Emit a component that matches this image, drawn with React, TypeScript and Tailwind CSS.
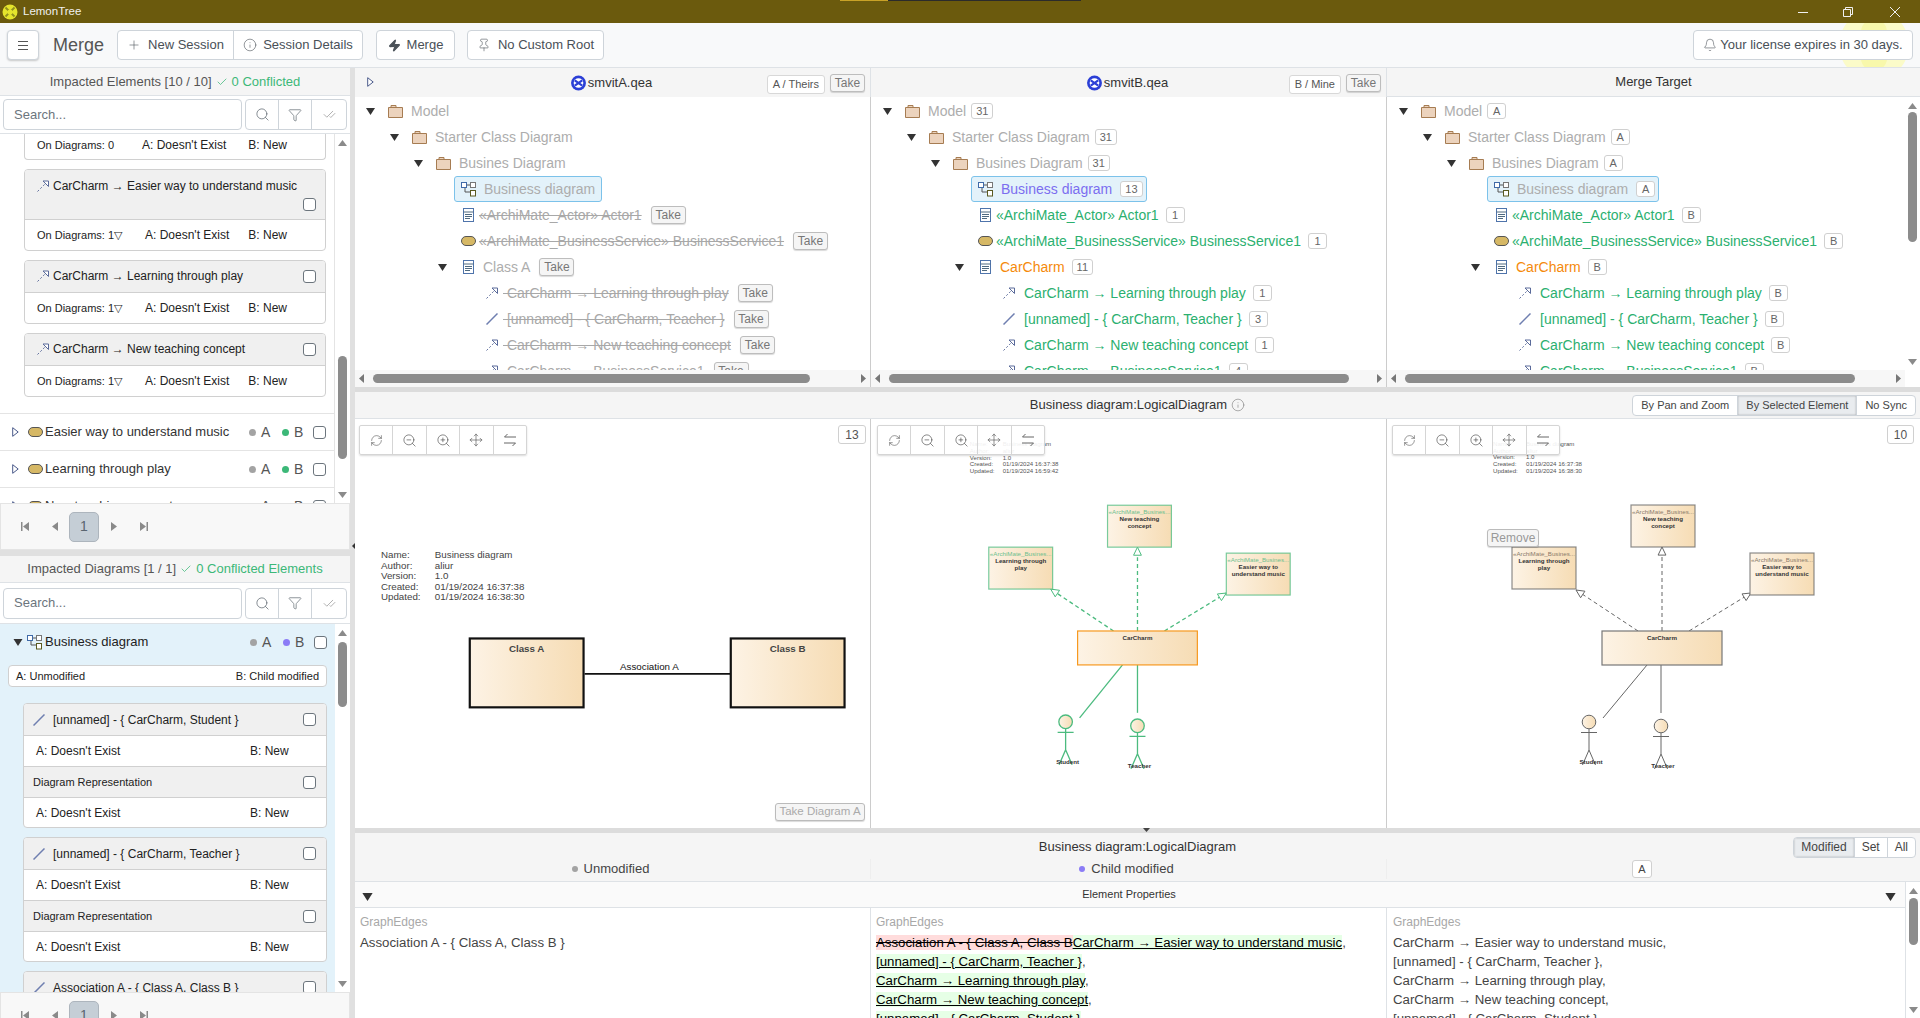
import type { ReactNode } from 'react'
import { Bell, Check, CheckCheck, Filter, Info, Move, Pin, Plus, RefreshCw, Search, Zap, ZoomIn, ZoomOut } from 'lucide-react'

function Btn({ children, className = '' }: { children: ReactNode; className?: string }) {
  return <div className={'flex items-center justify-center text-[13px] text-[#495057] ' + className}>{children}</div>
}

function CheckBox({ className = '' }: { className?: string }) {
  return <div className={'h-[13px] w-[13px] shrink-0 rounded-[3px] border border-[#6c757d] bg-white ' + className} />
}

function Take({ className = '' }: { className?: string }) {
  return <div className={'flex h-[18px] w-[35px] shrink-0 items-center justify-center rounded-[3px] border border-[#bdbdbd] bg-[#f5f5f5] text-[12px] leading-none text-[#777] shadow-[0_1px_1px_rgba(0,0,0,0.15)] ' + className}>Take</div>
}

function Badge({ children, className = '' }: { children: ReactNode; className?: string }) {
  return <div className={'ml-[5px] flex h-[16px] min-w-[19px] shrink-0 items-center justify-center rounded-[3px] border border-[#d0d0d0] bg-white px-[4px] text-[11px] leading-none text-[#666] ' + className}>{children}</div>
}

function TriDown({ className = '' }: { className?: string }) {
  return <svg width="9" height="7" viewBox="0 0 9 7" className={'shrink-0 ' + className}><path d="M0 0h9L4.500 7z" fill="#333" /></svg>
}

function TriRight() {
  return <svg width="7" height="10" viewBox="0 0 7 10" className="shrink-0"><path d="M.7.7 6.200 5 .7 9.300z" fill="#fff" stroke="#4a5a8a" /></svg>
}

function Folder() {
  return (
    <svg width="15" height="14" viewBox="0 0 15 14" className="shrink-0">
      <path d="M.5 3.500h14v10H.5zM3 3.500V1.500h5v2" fill="#ecd3bd" stroke="#a67c52" />
    </svg>
  )
}

function DiagramIcon() {
  return (
    <svg width="15" height="15" viewBox="0 0 15 15" className="shrink-0">
      <path d="M4 5v5h6M5 3h5" fill="none" stroke="#555" />
      <rect x=".5" y=".5" width="5" height="5" fill="#fff" stroke="#3f6aa8" />
      <rect x="9.500" y=".5" width="5" height="5" fill="#fff" stroke="#777" />
      <rect x="9.500" y="8.500" width="5" height="5.500" fill="#fff" stroke="#5a5a20" />
    </svg>
  )
}

function ClassIcon() {
  return (
    <svg width="11" height="14" viewBox="0 0 11 14" className="shrink-0">
      <rect x=".5" y=".5" width="10" height="13" fill="#fff" stroke="#4f74ab" />
      <path d="M.5 4h10M2 6.500h7M2 8.500h7M2 10.500h5" stroke="#4f6a80" />
    </svg>
  )
}

function Oval({ className = '' }: { className?: string }) {
  return <div className={'h-[10px] w-[15px] shrink-0 rounded-[5px] border border-[#555] bg-[#d6b865] ' + className} />
}

function RelIcon() {
  return (
    <svg width="12" height="12" viewBox="0 0 12 12" className="shrink-0">
      <path d="M.5 11.500 8 4" fill="none" stroke="#5a6a9a" strokeDasharray="2 2" />
      <path d="M6 1h5.500v5.500z" fill="#fff" stroke="#5a6a9a" />
    </svg>
  )
}

function LineIcon() {
  return (
    <svg width="12" height="12" viewBox="0 0 12 12" className="shrink-0">
      <path d="M.5 11.500 11.500.5" fill="none" stroke="#6f7fb0" strokeWidth="1.500" />
    </svg>
  )
}

function Row({ pl, children }: { pl: string; children: ReactNode }) {
  return <div className={'flex h-[26px] items-center whitespace-nowrap ' + pl}>{children}</div>
}

const greyText = 'text-[#adadad]'
const greenText = 'text-[#2bb06f]'
const struck = 'text-[#a8a8a8] line-through'

function FolderRow({ pl, label, badge }: { pl: string; label: string; badge?: string }) {
  return (
    <Row pl={pl}>
      <TriDown />
      <div className="ml-[13px]"><Folder /></div>
      <span className={'ml-[8px] ' + greyText}>{label}</span>
      {badge && <Badge>{badge}</Badge>}
    </Row>
  )
}

function SelectedRow({ label, labelClass, badge }: { label: string; labelClass: string; badge?: string }) {
  return (
    <Row pl="pl-[99px]">
      <div className="flex h-[26px] items-center rounded-[3px] border border-[#7cc2ea] bg-[#e3f2fa] pl-[6px] pr-[3px]">
        <DiagramIcon />
        <span className={'ml-[8px] mr-[3px] ' + labelClass}>{label}</span>
        {badge && <Badge className="ml-0">{badge}</Badge>}
      </div>
    </Row>
  )
}

function ElementRows({ cls, trail, labels }: { cls: string; trail: (i: number) => ReactNode; labels: string[] }) {
  return (
    <>
      <Row pl="pl-[108px]"><ClassIcon /><span className={'ml-[5px] ' + cls}>«ArchiMate_Actor» Actor1</span>{trail(0)}</Row>
      <Row pl="pl-[106px]"><Oval /><span className={'ml-[3px] ' + cls}>«ArchiMate_BusinessService» BusinessService1</span>{trail(1)}</Row>
      <Row pl="pl-[83px]">
        <TriDown />
        <div className="ml-[16px]"><ClassIcon /></div>
        <span className={'ml-[9px] ' + labels[0]}>{labels[1]}</span>
        {trail(2)}
      </Row>
    </>
  )
}

function TreeA() {
  const t = (cls: string) => <Take className={cls} />
  return (
    <div className="h-[273px] overflow-hidden pt-px">
      <FolderRow pl="pl-[11px]" label="Model" />
      <FolderRow pl="pl-[35px]" label="Starter Class Diagram" />
      <FolderRow pl="pl-[59px]" label="Busines Diagram" />
      <SelectedRow label="Business diagram" labelClass={greyText} />
      <ElementRows cls={struck} trail={() => t('ml-[9px]')} labels={[greyText, 'Class A']} />
      <Row pl="pl-[131px]"><RelIcon /><span className={'ml-[5px] ' + struck}>{'\u00a0CarCharm → Learning through play'}</span>{t('ml-[9px]')}</Row>
      <Row pl="pl-[131px]"><LineIcon /><span className={'ml-[5px] ' + struck}>{'\u00a0[unnamed] - { CarCharm, Teacher }'}</span>{t('ml-[9px]')}</Row>
      <Row pl="pl-[131px]"><RelIcon /><span className={'ml-[5px] ' + struck}>{'\u00a0CarCharm → New teaching concept'}</span>{t('ml-[9px]')}</Row>
      <Row pl="pl-[131px]"><RelIcon /><span className={'ml-[5px] ' + struck}>{'\u00a0CarCharm → BusinessService1'}</span>{t('ml-[9px]')}</Row>
    </div>
  )
}

function TreeRight({ top, sel, selClass, el, cls, rel }: { top: string; sel: string; selClass: string; el: string[]; cls: string; rel: string[] }) {
  return (
    <div className="h-[273px] overflow-hidden pl-[1px] pt-px">
      <FolderRow pl="pl-[11px]" label="Model" badge={top} />
      <FolderRow pl="pl-[35px]" label="Starter Class Diagram" badge={top} />
      <FolderRow pl="pl-[59px]" label="Busines Diagram" badge={top} />
      <SelectedRow label="Business diagram" labelClass={selClass} badge={sel} />
      <ElementRows cls={cls} trail={(i) => <Badge className="ml-[7px]">{el[i]}</Badge>} labels={['text-[#f58a0b]', 'CarCharm']} />
      <Row pl="pl-[131px]"><RelIcon /><span className={'ml-[9px] ' + cls}>CarCharm → Learning through play</span><Badge className="ml-[7px]">{rel[0]}</Badge></Row>
      <Row pl="pl-[131px]"><LineIcon /><span className={'ml-[9px] ' + cls}>{'[unnamed] - { CarCharm, Teacher }'}</span><Badge className="ml-[7px]">{rel[1]}</Badge></Row>
      <Row pl="pl-[131px]"><RelIcon /><span className={'ml-[9px] ' + cls}>CarCharm → New teaching concept</span><Badge className="ml-[7px]">{rel[2]}</Badge></Row>
      <Row pl="pl-[131px]"><RelIcon /><span className={'ml-[9px] ' + cls}>CarCharm → BusinessService1</span><Badge className="ml-[7px]">{rel[3]}</Badge></Row>
    </div>
  )
}

function HScroll({ thumb }: { thumb: string }) {
  return (
    <div className="flex h-[17px] items-center bg-[#f7f7f7] px-[4px]">
      <svg width="5" height="9" viewBox="0 0 5 9" className="shrink-0"><path d="M5 0v9L0 4.500z" fill="#777" /></svg>
      <div className="flex-1 pl-[9px] pr-[5px]"><div className={'h-[9px] rounded-[5px] bg-[#8c8c8c] ' + thumb} /></div>
      <svg width="5" height="9" viewBox="0 0 5 9" className="shrink-0"><path d="M0 0v9l5-4.500z" fill="#777" /></svg>
    </div>
  )
}

function VScroll({ thumb, className = '' }: { thumb: string; className?: string }) {
  return (
    <div className={'flex w-[15px] shrink-0 flex-col items-center justify-between bg-white pb-[5px] pt-[6px] ' + className}>
      <div className="w-full">
        <svg width="9" height="6" viewBox="0 0 9 6" className="mx-auto"><path d="M0 6h9L4.500 0z" fill="#8a8a8a" /></svg>
        <div className={'mx-auto w-[9px] rounded-[5px] bg-[#8c8c8c] ' + thumb} />
      </div>
      <svg width="9" height="6" viewBox="0 0 9 6"><path d="M0 0h9L4.500 6z" fill="#8a8a8a" /></svg>
    </div>
  )
}

function SearchRow({ className }: { className: string }) {
  return (
    <div className={'flex items-center border-b border-[#dee2e6] pl-[3px] pr-[3px] ' + className}>
      <div className="flex h-[31px] w-[239px] items-center rounded-[4px] border border-[#ced4da] bg-white pl-[10px] text-[13px] text-[#6c757d]">Search...</div>
      <div className="ml-[3px] flex h-[31px] w-[102px] rounded-[4px] border border-[#ced4da] bg-white text-[#5f6870]">
        <div className="flex w-[33px] items-center justify-center border-r border-[#ced4da]"><Search size={15} strokeWidth={1.2} /></div>
        <div className="flex w-[33px] items-center justify-center border-r border-[#ced4da]"><Filter size={14} strokeWidth={1.2} /></div>
        <div className="flex flex-1 items-center justify-center text-[#888]"><CheckCheck size={13} strokeWidth={1.2} /></div>
      </div>
    </div>
  )
}

function Pager({ className = '' }: { className?: string }) {
  return (
    <div className={'flex items-center border border-[#e4e4e4] bg-[#f8f8f8] pl-[20px] ' + className}>
      <svg width="8" height="9" viewBox="0 0 8 9" className="shrink-0"><path d="M0 0h1.500v9H0zM8 0v9L2 4.500z" fill="#8a8a8a" /></svg>
      <svg width="6" height="9" viewBox="0 0 6 9" className="ml-[23px] shrink-0"><path d="M6 0v9L0 4.500z" fill="#8a8a8a" /></svg>
      <div className="ml-[11px] flex h-[30px] w-[30px] shrink-0 items-center justify-center rounded-[5px] border border-[#adb5bd] bg-[#c5ced6] text-[14px] text-[#5a6570]">1</div>
      <svg width="6" height="9" viewBox="0 0 6 9" className="ml-[12px] shrink-0"><path d="M0 0v9l6-4.500z" fill="#8a8a8a" /></svg>
      <svg width="8" height="9" viewBox="0 0 8 9" className="ml-[23px] shrink-0"><path d="M0 0v9l6-4.500zM6.500 0H8v9H6.500z" fill="#8a8a8a" /></svg>
    </div>
  )
}

function ElementCard({ title, tall, foot }: { title: string; tall?: boolean; foot: string }) {
  return (
    <div className="ml-[24px] w-[302px] overflow-hidden rounded-[4px] border border-[#d0d0d0] bg-white text-[12px] text-[#222]">
      <div className={tall ? 'relative h-[50px] border-b border-[#d0d0d0] bg-[#f0f0f0] pl-[12px] pt-[7px]' : 'flex h-[32px] items-center border-b border-[#d0d0d0] bg-[#f0f0f0] pb-px pl-[12px]'}>
        <div className="flex items-center whitespace-nowrap"><RelIcon /><span className="ml-[4px]">{title}</span></div>
        {tall ? <CheckBox className="absolute bottom-[8px] right-[9px]" /> : <CheckBox className="ml-auto mr-[9px]" />}
      </div>
      <div className="flex h-[30px] items-center pl-[12px]">
        <span className="w-[108px] text-[11px]">{foot}</span>
        <span>A: Doesn't Exist</span>
        <span className="ml-auto mr-[38px]">B: New</span>
      </div>
    </div>
  )
}

function ListRow({ label }: { label: string }) {
  return (
    <div className="flex h-[37px] shrink-0 items-center border-t border-[#e4e4e4] pl-[12px] pr-[8px] text-[13px] text-[#333]">
      <TriRight />
      <Oval className="ml-[9px]" />
      <span className="ml-[2px] whitespace-nowrap">{label}</span>
      <Flags b="bg-[#3cb878]" />
    </div>
  )
}

function Flags({ b }: { b: string }) {
  return (
    <div className="ml-auto flex items-center text-[14px] text-[#555]">
      <div className="h-[7px] w-[7px] rounded-full bg-[#a3a3a3]" />
      <span className="ml-[5px] w-[21px]">A</span>
      <div className={'h-[7px] w-[7px] rounded-full ' + b} />
      <span className="ml-[5px] w-[19px]">B</span>
      <CheckBox />
    </div>
  )
}

function AB({ className = '' }: { className?: string }) {
  return (
    <div className={'flex items-center pl-[12px] ' + className}>
      <span className="w-[214px]">A: Doesn't Exist</span>
      <span>B: New</span>
    </div>
  )
}

function Rep({ title }: { title: string }) {
  return (
    <div className="w-[304px] overflow-hidden rounded-[4px] border border-[#d0d0d0] bg-white text-[12px] text-[#222]">
      <div className="flex h-[32px] items-center border-b border-[#d0d0d0] bg-[#f0f0f0] pl-[9px] pr-[10px]">
        <LineIcon />
        <span className="ml-[8px] whitespace-nowrap">{title}</span>
        <CheckBox className="ml-auto" />
      </div>
      <AB className="h-[30px]" />
      <div className="flex h-[32px] items-center border-y border-[#d0d0d0] bg-[#f0f0f0] pl-[9px] pr-[10px] text-[11px]">
        Diagram Representation
        <CheckBox className="ml-auto" />
      </div>
      <AB className="h-[29px]" />
    </div>
  )
}

function LeftPane() {
  return (
    <div className="flex w-[350px] shrink-0 flex-col">
      <div className="flex h-[28px] items-center justify-center border-b border-[#dee2e6] bg-[#f5f5f5] text-[13px] text-[#555]">
        Impacted Elements [10 / 10]
        <Check size={12} strokeWidth={1.5} className="mx-[4px] text-[#3cb878]" />
        <span className="text-[#3cb878]">0 Conflicted</span>
      </div>
      <SearchRow className="h-[38px]" />
      <div className="flex h-[369px] overflow-hidden">
        <div className="w-[335px] shrink-0 border-r border-[#e4e4e4]">
          <div className="ml-[24px] flex h-[26px] w-[302px] items-center rounded-b-[4px] border border-t-0 border-[#d0d0d0] bg-white pb-[3px] pl-[12px] text-[12px] text-[#222]">
            <span className="w-[105px] text-[11px]">On Diagrams: 0</span>
            <span>A: Doesn't Exist</span>
            <span className="ml-auto mr-[38px]">B: New</span>
          </div>
          <div className="mt-[9px] flex flex-col gap-[9px]">
            <ElementCard title="CarCharm → Easier way to understand music" tall foot="On Diagrams: 1▽" />
            <ElementCard title="CarCharm → Learning through play" foot="On Diagrams: 1▽" />
            <ElementCard title="CarCharm → New teaching concept" foot="On Diagrams: 1▽" />
          </div>
          <div className="mt-[16px]">
            <ListRow label="Easier way to understand music" />
            <ListRow label="Learning through play" />
            <ListRow label="New teaching concept" />
          </div>
        </div>
        <VScroll thumb="mt-[210px] h-[103px]" />
      </div>
      <Pager className="h-[47px]" />
      <div className="flex h-[6px] items-center bg-[#e0e0e0]" />
      <div className="flex h-[27px] items-center justify-center border-b border-[#dee2e6] bg-[#f5f5f5] text-[13px] text-[#555]">
        Impacted Diagrams [1 / 1]
        <Check size={12} strokeWidth={1.5} className="mx-[4px] text-[#3cb878]" />
        <span className="text-[#3cb878]">0 Conflicted Elements</span>
      </div>
      <SearchRow className="h-[41px]" />
      <div className="flex h-[368px] overflow-hidden">
        <div className="w-[335px] shrink-0 bg-[#e3f2fa]">
          <div className="flex h-[36px] items-center pl-[13px] pr-[8px] text-[13px] text-[#222]">
            <TriDown className="mr-[4px] h-[7px] w-[10px]" />
            <DiagramIcon />
            <span className="ml-[3px]">Business diagram</span>
            <Flags b="bg-[#8b7cf6]" />
          </div>
          <div className="ml-[8px] mt-[5px] flex h-[22px] w-[319px] items-center justify-between rounded-[4px] border border-[#d0d0d0] bg-white px-[7px] text-[11px] text-[#222]">
            <span>A: Unmodified</span>
            <span>B: Child modified</span>
          </div>
          <div className="ml-[23px] mt-[16px] flex flex-col gap-[9px]">
            <Rep title="[unnamed] - { CarCharm, Student }" />
            <Rep title="[unnamed] - { CarCharm, Teacher }" />
            <Rep title="Association A - { Class A, Class B }" />
          </div>
        </div>
        <VScroll thumb="mt-[6px] h-[65px]" />
      </div>
      <div className="h-[26px] overflow-hidden"><Pager className="h-[47px]" /></div>
    </div>
  )
}

type Box = { x: number; y: number; w: number; h: number; lines: string[] }
type Seg = [number, number, number, number]
type Actor = { x: number; y: number; label: string; lx: number }
type Diagram = {
  view: string
  stroke: string
  strokeW: number
  car: Box
  carStroke: string
  boxes: Box[]
  dashed: Seg[]
  solid: Seg[]
  actors: Actor[]
  meta: { x: number; vx: number; updated: string }
  tag: string
}

const metaRows = (updated: string) => [
  ['Name:', 'Business diagram'],
  ['Author:', 'aliur'],
  ['Version:', '1.0'],
  ['Created:', '01/19/2024 16:37:38'],
  ['Updated:', updated],
]

function Head({ s, color }: { s: Seg; color: string }) {
  const [x1, y1, x2, y2] = s
  const a = Math.atan2(y2 - y1, x2 - x1)
  const l = 9
  const p = (d: number) => `${x2 - l * Math.cos(a + d)},${y2 - l * Math.sin(a + d)}`
  return <polygon points={`${x2},${y2} ${p(0.45)} ${p(-0.45)}`} fill="#fff" stroke={color} strokeWidth="1" />
}

function Sketch({ d, id }: { d: Diagram; id: string }) {
  const cols = [d.meta.x, d.meta.vx]
  return (
    <svg viewBox={d.view} className="block h-[409px] w-full" fontFamily="'Liberation Sans', sans-serif">
      <defs>
        <linearGradient id={id}>
          <stop offset="0" stopColor="#fdf3e5" />
          <stop offset="1" stopColor="#f6dcb4" />
        </linearGradient>
      </defs>
      {metaRows(d.meta.updated).map((r, i) => (
        <g key={r[0]} fontSize="6.100" fill="#555">
          <text x={cols[0]} y={446 + i * 6.700}>{r[0]}</text>
          <text x={cols[1]} y={446 + i * 6.700}>{r[1]}</text>
        </g>
      ))}
      {d.dashed.map((s, i) => (
        <g key={i}>
          <line x1={s[0]} y1={s[1]} x2={s[2]} y2={s[3]} stroke={d.stroke} strokeWidth={d.strokeW} strokeDasharray="4 3" />
          <Head s={s} color={d.stroke} />
        </g>
      ))}
      {d.solid.map((s, i) => (
        <line key={i} x1={s[0]} y1={s[1]} x2={s[2]} y2={s[3]} stroke={d.stroke} strokeWidth={d.strokeW} />
      ))}
      {d.boxes.map((b) => (
        <g key={b.lines[0]}>
          <rect x={b.x} y={b.y} width={b.w} height={b.h} fill={`url(#${id})`} stroke={d.stroke} strokeOpacity="0.75" strokeWidth="1.200" />
          <text x={b.x + b.w / 2} y={b.y + 9} textAnchor="middle" fontSize="6.200" fill={d.tag}>«ArchiMate_Busines...</text>
          {b.lines.map((l, i) => (
            <text key={l} x={b.x + b.w / 2} y={b.y + 16 + i * 6.800} textAnchor="middle" fontSize="6.200" fontWeight="700" fill="#333">{l}</text>
          ))}
        </g>
      ))}
      <rect x={d.car.x} y={d.car.y} width={d.car.w} height={d.car.h} fill={`url(#${id})`} stroke={d.carStroke} strokeWidth="1.200" />
      <text x={d.car.x + d.car.w / 2} y={d.car.y + 9} textAnchor="middle" fontSize="6.200" fontWeight="700" fill="#333">CarCharm</text>
      {d.actors.map((a) => (
        <g key={a.label} stroke={d.stroke} strokeWidth={d.strokeW} fill="none">
          <circle cx={a.x} cy={a.y} r="6.800" fill={`url(#${id})`} />
          <path d={`M${a.x - 8} ${a.y + 10.500}h16M${a.x} ${a.y + 7}v21l-6.500 15M${a.x} ${a.y + 28}l6.500 15`} />
          <text x={a.lx} y={a.y + 42} textAnchor="middle" fontSize="6.200" fontWeight="700" fill="#333" stroke="none">{a.label}</text>
        </g>
      ))}
    </svg>
  )
}

const middle: Diagram = {
  view: '871 419 516 409',
  stroke: '#4cbb7f',
  strokeW: 1.300,
  carStroke: '#f7991f',
  tag: '#6fbf8f',
  car: { x: 1078, y: 631, w: 120, h: 34, lines: [] },
  boxes: [
    { x: 1108, y: 505, w: 64, h: 42, lines: ['New teaching', 'concept'] },
    { x: 989, y: 547, w: 64, h: 42, lines: ['Learning through', 'play'] },
    { x: 1227, y: 553, w: 64, h: 42, lines: ['Easier way to', 'understand music'] },
  ],
  dashed: [[1114, 631, 1051, 589], [1138, 631, 1138, 547], [1165, 631, 1227, 593]],
  solid: [[1123, 665, 1080, 718], [1138, 665, 1138, 713]],
  actors: [{ x: 1066, y: 722, label: 'Student', lx: 1068 }, { x: 1138, y: 726, label: 'Teacher', lx: 1140 }],
  meta: { x: 970, vx: 1003, updated: '01/19/2024 16:59:42' },
}

const right: Diagram = {
  view: '1387 419 533 409',
  stroke: '#666666',
  strokeW: 1,
  carStroke: '#777',
  tag: '#8a7a6a',
  car: { x: 1602, y: 631, w: 120, h: 34, lines: [] },
  boxes: [
    { x: 1631, y: 505, w: 64, h: 42, lines: ['New teaching', 'concept'] },
    { x: 1512, y: 547, w: 64, h: 42, lines: ['Learning through', 'play'] },
    { x: 1750, y: 553, w: 64, h: 42, lines: ['Easier way to', 'understand music'] },
  ],
  dashed: [[1638, 631, 1576, 590], [1662, 631, 1662, 547], [1689, 631, 1751, 593]],
  solid: [[1647, 665, 1603, 718], [1661, 665, 1661, 713]],
  actors: [{ x: 1589, y: 722, label: 'Student', lx: 1591 }, { x: 1661, y: 726, label: 'Teacher', lx: 1663 }],
  meta: { x: 1493, vx: 1526, updated: '01/19/2024 16:38:30' },
}

function DiagramA() {
  return (
    <svg viewBox="355 419 516 409" className="block h-[409px] w-full" fontFamily="'Liberation Sans', sans-serif">
      <defs>
        <linearGradient id="gradA">
          <stop offset="0" stopColor="#fdf3e5" />
          <stop offset="1" stopColor="#f6dcb4" />
        </linearGradient>
      </defs>
      {metaRows('01/19/2024 16:38:30').map((r, i) => (
        <g key={r[0]} fontSize="9.800" fill="#444">
          <text x="381" y={558 + i * 10.600}>{r[0]}</text>
          <text x="435" y={558 + i * 10.600}>{r[1]}</text>
        </g>
      ))}
      <line x1="585" y1="674" x2="731" y2="674" stroke="#111" strokeWidth="1.800" />
      <text x="650" y="670" textAnchor="middle" fontSize="9.800" fill="#111">Association A</text>
      {[[470, 'Class A'], [731.500, 'Class B']].map(([x, t]) => (
        <g key={t}>
          <rect x={x} y="638.500" width="114" height="69" fill="url(#gradA)" stroke="#111" strokeWidth="2.200" />
          <text x={(x as number) + 57} y="652" textAnchor="middle" fontSize="9.800" fontWeight="700" fill="#444">{t}</text>
        </g>
      ))}
    </svg>
  )
}

function SwapIcon() {
  return (
    <svg width="14" height="14" viewBox="0 0 14 14" fill="none" stroke="#555" strokeWidth=".9">
      <path d="M13 4H1.500L4.500 1M1 10h11.500l-3 3" />
    </svg>
  )
}

function DiagramTools({ className }: { className: string }) {
  const tools = [
    <RefreshCw size={13} strokeWidth={1} />,
    <ZoomOut size={15} strokeWidth={1} />,
    <ZoomIn size={15} strokeWidth={1} />,
    <Move size={14} strokeWidth={1} />,
    <SwapIcon />,
  ]
  return (
    <div className={'absolute top-[6px] flex h-[30px] w-[168px] divide-x divide-[#d5d5d5] rounded-[2px] border border-[#d5d5d5] bg-white/90 text-[#444] shadow-[0_1px_2px_rgba(0,0,0,0.15)] ' + className}>
      {tools.map((t, i) => (
        <div key={i} className="flex flex-1 items-center justify-center">{t}</div>
      ))}
    </div>
  )
}

function CountTag({ children, className }: { children: ReactNode; className: string }) {
  return <div className={'absolute top-[6px] flex h-[19px] items-center justify-center rounded-[3px] border border-[#d0d0d0] bg-white text-[12px] text-[#555] ' + className}>{children}</div>
}

function TreeHeader({ name, tag }: { name: string; tag: string }) {
  return (
    <div className="grid h-[29px] flex-1 grid-cols-[1fr_auto_1fr] items-center bg-[#f5f5f5]">
      <div />
      <div className="-ml-[3px] flex items-center text-[13px] text-[#333]">
        <svg width="17" height="16" viewBox="0 0 15 15" className="mr-px">
          <circle cx="7.500" cy="7.500" r="7" fill="#2b3fd6" />
          <circle cx="7.500" cy="7.500" r="4.500" fill="#fff" />
          <path d="M4 5l7 5M11 5l-7 5" stroke="#2b3fd6" strokeWidth="2" />
        </svg>
        {name}
      </div>
      <div className="flex items-center justify-end pr-[5px]">
        <div className="mt-[3px] flex h-[19px] items-center rounded-[3px] border border-[#d8d8d8] bg-white px-[5px] text-[11px] text-[#555]">{tag}</div>
        <Take className="ml-[5px]" />
      </div>
    </div>
  )
}

function Seg3({ items, active, className }: { items: string[]; active: number; className: string }) {
  return (
    <div className={'flex overflow-hidden rounded-[4px] border border-[#ced4da] bg-white text-[#444] ' + className}>
      {items.map((t, i) => (
        <div key={t} className={(i === active ? 'bg-[#e9ecef] shadow-[inset_0_0_2px_rgba(0,0,0,0.3)] ' : '') + (i ? 'border-l border-[#ced4da] ' : '') + 'flex items-center'}>{t}</div>
      ))}
    </div>
  )
}

function Diff({ children, bg }: { children: ReactNode; bg: string }) {
  return <span className={'text-black underline ' + bg}>{children}</span>
}

function RightPane() {
  return (
    <div className="flex min-w-0 flex-1 flex-col text-[14px]">
      <div className="flex h-[29px] border-b border-[#dee2e6] bg-[#f5f5f5]">
        <div className="relative flex w-[516px] border-r border-[#dee2e6]">
          <div className="absolute left-[12px] top-[9px]"><TriRight /></div>
          <TreeHeader name="smvitA.qea" tag="A / Theirs" />
        </div>
        <div className="flex w-[516px] border-r border-[#dee2e6]">
          <TreeHeader name="smvitB.qea" tag="B / Mine" />
        </div>
        <div className="flex flex-1 items-center justify-center pb-px text-[13px] text-[#333]">Merge Target</div>
      </div>
      <div className="flex h-[290px]">
        <div className="w-[516px] border-r border-[#ccc]"><TreeA /><HScroll thumb="w-[437px]" /></div>
        <div className="w-[516px] border-r border-[#ccc]">
          <TreeRight top="31" sel="13" selClass="text-[#7b6ef0]" el={['1', '1', '11']} cls={greenText} rel={['1', '3', '1', '4']} />
          <HScroll thumb="w-[460px]" />
        </div>
        <div className="flex min-w-0 flex-1">
          <div className="min-w-0 flex-1">
            <TreeRight top="A" sel="A" selClass={greyText} el={['B', 'B', 'B']} cls={greenText} rel={['B', 'B', 'B', 'B']} />
            <HScroll thumb="w-[450px]" />
          </div>
          <VScroll thumb="mt-[3px] h-[130px]" className="h-[273px]" />
        </div>
      </div>
      <div className="h-[5px] bg-[#dcdcdc]" />

      <div className="grid h-[27px] grid-cols-[1fr_auto_1fr] items-center border-b border-[#dee2e6] bg-[#f5f5f5]">
        <div />
        <div className="flex items-center text-[13px] text-[#333]">
          Business diagram:LogicalDiagram
          <Info size={14} strokeWidth={1} className="ml-[4px] text-[#777]" />
        </div>
        <div className="flex justify-end pr-[4px]">
          <Seg3 items={['By Pan and Zoom', 'By Selected Element', 'No Sync']} active={1} className="h-[21px] text-[11px] [&>div]:px-[8px]" />
        </div>
      </div>
      <div className="flex h-[409px]">
        <div className="relative w-[516px] border-r border-[#ccc]">
          <DiagramA />
          <DiagramTools className="left-[4px]" />
          <CountTag className="right-[4px] w-[28px]">13</CountTag>
          <button className="absolute bottom-[7px] right-[5px] flex h-[18px] w-[90px] items-center justify-center rounded-[3px] border border-[#bbb] bg-[#f5f5f5] text-[11.500px] text-[#aaa] shadow-[0_1px_1px_rgba(0,0,0,0.15)]">Take Diagram A</button>
        </div>
        <div className="relative w-[516px] border-r border-[#ccc]">
          <Sketch d={middle} id="gradB" />
          <DiagramTools className="left-[6px]" />
        </div>
        <div className="relative min-w-0 flex-1">
          <Sketch d={right} id="gradC" />
          <DiagramTools className="left-[5px]" />
          <CountTag className="right-[6px] w-[27px]">10</CountTag>
          <button className="absolute left-[100px] top-[110px] flex h-[18px] w-[52px] items-center justify-center rounded-[3px] border border-[#bbb] bg-[#f5f5f5] text-[12px] text-[#999] shadow-[0_1px_1px_rgba(0,0,0,0.15)]">Remove</button>
        </div>
      </div>
      <div className="flex h-[5px] justify-center bg-[#dcdcdc]">
        <svg width="7" height="4" viewBox="0 0 7 4" className="ml-[18px]"><path d="M0 0h7L3.500 4z" fill="#444" /></svg>
      </div>

      <div className="h-[49px] border-b border-[#dee2e6] bg-[#f5f5f5]">
        <div className="grid h-[26px] grid-cols-[1fr_auto_1fr] items-center pt-[2px]">
          <div />
          <div className="text-[13px] text-[#333]">Business diagram:LogicalDiagram</div>
          <div className="flex justify-end pr-[4px]">
            <Seg3 items={['Modified', 'Set', 'All']} active={0} className="h-[21px] text-[12px] [&>div]:px-[7px]" />
          </div>
        </div>
        <div className="flex h-[20px] items-center text-[13px] text-[#444]">
          <div className="flex w-[516px] items-center justify-center border-r border-[#eee] pr-[4px]"><div className="mr-[6px] h-[6px] w-[6px] rounded-full bg-[#a3a3a3]" />Unmodified</div>
          <div className="flex w-[516px] items-center justify-center border-r border-[#eee] pr-[4px]"><div className="mr-[6px] h-[6px] w-[6px] rounded-full bg-[#8b7cf6]" />Child modified</div>
          <div className="flex flex-1 justify-center pr-[23px]"><div className="flex h-[18px] w-[20px] items-center justify-center rounded-[3px] border border-[#d0d0d0] bg-white text-[11px]">A</div></div>
        </div>
      </div>
      <div className="flex min-h-0 flex-1 overflow-hidden">
        <div className="min-w-0 flex-1">
          <div className="flex h-[26px] items-center justify-between border-b border-[#dee2e6] bg-[#fafafa] pl-[7px] pr-[9px]">
            <TriDown className="mt-[4px] h-[8px] w-[11px]" />
            <span className="text-[11px] text-[#333]">Element Properties</span>
            <TriDown className="mt-[4px] h-[8px] w-[11px]" />
          </div>
          <div className="flex h-[110px] text-[13.250px] leading-[19px] text-[#444]">
            <div className="w-[516px] border-r border-[#dee2e6] pl-[5px] pt-[6px]">
              <div className="text-[12px] leading-[16px] text-[#a8a8a8]">GraphEdges</div>
              <div className="mt-[3px]">{'Association A - { Class A, Class B }'}</div>
            </div>
            <div className="w-[516px] border-r border-[#dee2e6] pl-[5px] pt-[6px]">
              <div className="text-[12px] leading-[16px] text-[#a8a8a8]">GraphEdges</div>
              <div className="mt-[3px] whitespace-nowrap">
                <span className="bg-[#ffdcdc] text-black line-through">{'Association A - { Class A, Class B'}</span>
                <Diff bg="bg-[#e6ffe6]">CarCharm → Easier way to understand music</Diff>,
              </div>
              <div><Diff bg="bg-[#e6ffe6]">{'[unnamed] - { CarCharm, Teacher }'}</Diff>,</div>
              <div><Diff bg="bg-[#e6ffe6]">CarCharm → Learning through play</Diff>,</div>
              <div><Diff bg="bg-[#e6ffe6]">CarCharm → New teaching concept</Diff>,</div>
              <div><Diff bg="bg-[#e6ffe6]">{'[unnamed] - { CarCharm, Student }'}</Diff>,</div>
            </div>
            <div className="flex-1 pl-[6px] pt-[6px]">
              <div className="text-[12px] leading-[16px] text-[#a8a8a8]">GraphEdges</div>
              <div className="mt-[3px]">CarCharm → Easier way to understand music,</div>
              <div>{'[unnamed] - { CarCharm, Teacher },'}</div>
              <div>CarCharm → Learning through play,</div>
              <div>CarCharm → New teaching concept,</div>
              <div>{'[unnamed] - { CarCharm, Student },'}</div>
            </div>
          </div>
        </div>
        <VScroll thumb="mt-[4px] h-[47px]" className="border-l border-[#dee2e6]" />
      </div>
    </div>
  )
}

export default function App() {
  return (
    <div className="flex h-screen w-screen flex-col overflow-hidden bg-white font-['Liberation_Sans',Arial,sans-serif] text-[#333]">
      <div className="relative flex h-[23px] shrink-0 items-center bg-[#6b5a0d] pl-[2px] text-[11.500px] text-[#f0f0f0]">
        <div className="absolute left-[840px] top-0 h-px w-[48px] bg-[#c9a227]" />
        <div className="absolute left-[888px] top-0 h-px w-[193px] bg-[#2b2b2b]" />
        <svg width="16" height="16" viewBox="0 0 16 16">
          <circle cx="8" cy="8" r="7.500" fill="#e4e42c" />
          <path d="M3.500 3.500l9 9M12.500 3.500l-9 9" stroke="#8f8f20" strokeWidth="1.800" />
          <circle cx="8" cy="8" r="2.600" fill="#e4e42c" />
        </svg>
        <span className="ml-[5px]">LemonTree</span>
        <div className="ml-auto flex items-center pr-[20px]">
          <svg width="10" height="10" viewBox="0 0 10 10" stroke="#f0f0f0"><path d="M0 5.500h10" /></svg>
          <svg width="10" height="10" viewBox="0 0 10 10" fill="none" stroke="#f0f0f0" className="ml-[35px]"><path d="M.5 2.500h7v7h-7zM2.500 2.500v-2h7v7h-2" /></svg>
          <svg width="10" height="10" viewBox="0 0 10 10" fill="none" stroke="#f0f0f0" className="ml-[37px]"><path d="M0 0l10 10M10 0L0 10" /></svg>
        </div>
      </div>

      <div className="relative flex h-[45px] shrink-0 items-center overflow-hidden border-b border-[#dee2e6] bg-[#f8f9fa]">
        <div className="absolute right-[11px] top-[-13px] flex h-[70px] w-[70px] items-center justify-center rounded-full bg-[#fbfbc9]">
          <div className="h-[52px] w-[26px] rounded-full bg-[#f8f8ab]" />
        </div>
        <Btn className="relative ml-[7px] h-[30px] w-[32px] rounded-[4px] border border-[#ced4da] bg-white shadow-[0_1px_2px_rgba(0,0,0,0.2)]">
          <svg width="10" height="9" viewBox="0 0 10 9" stroke="#555"><path d="M0 .5h10M0 4.500h10M0 8.500h10" /></svg>
        </Btn>
        <div className="relative ml-[14px] w-[64px] text-[18px] text-[#555]">Merge</div>
        <div className="relative flex h-[30px] w-[246px] rounded-[4px] border border-[#ced4da] bg-white">
          <Btn className="w-[116px] border-r border-[#ced4da]"><Plus size={14} strokeWidth={1} className="mr-[7px]" />New Session</Btn>
          <Btn className="flex-1"><Info size={14} strokeWidth={1} className="mr-[6px]" />Session Details</Btn>
        </div>
        <Btn className="relative ml-[13px] h-[30px] w-[79px] rounded-[4px] border border-[#ced4da] bg-white">
          <Zap size={13} fill="#495057" className="mr-[6px]" />Merge
        </Btn>
        <Btn className="relative ml-[12px] h-[30px] w-[137px] rounded-[4px] border border-[#ced4da] bg-white">
          <Pin size={14} strokeWidth={1} className="mr-[7px]" />No Custom Root
        </Btn>
        <Btn className="relative ml-auto mr-[7px] h-[30px] w-[220px] rounded-[4px] border border-[#ced4da] bg-white">
          <Bell size={14} strokeWidth={1} className="mr-[3px]" />Your license expires in 30 days.
        </Btn>
      </div>

      <div className="flex min-h-0 flex-1">
        <LeftPane />
        <div className="relative w-[5px] shrink-0 bg-[#e0e0e0]">
          <svg width="3" height="6" viewBox="0 0 3 6" className="absolute left-[2px] top-[475px]"><path d="M3 0v6L0 3z" fill="#333" /></svg>
        </div>
        <RightPane />
      </div>
    </div>
  )
}
